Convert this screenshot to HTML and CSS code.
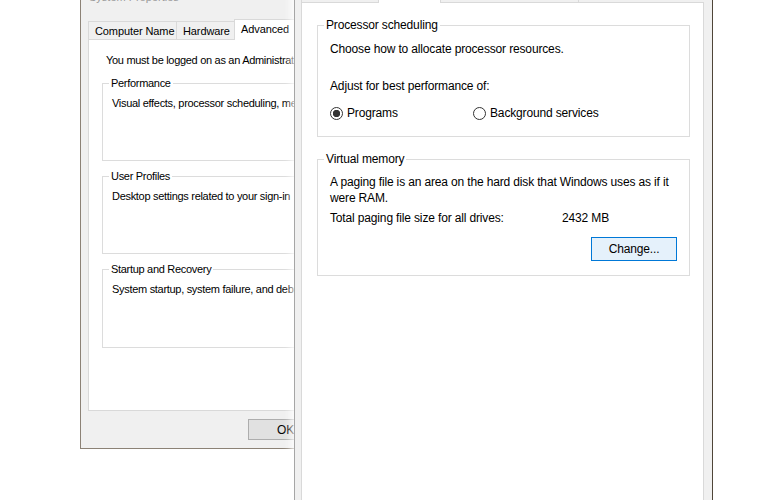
FILE: index.html
```html
<!DOCTYPE html>
<html lang="en">
  <head>
    <meta charset="UTF-8" />
    <meta name="viewport" content="width=device-width, initial-scale=1.0" />
    <title>Performance Options</title>
    <link rel="stylesheet" href="styles.css">
  </head>
  <body>
    <div class="desk">
      <!-- System Properties, behind -->
      <div class="win win-back">
        <div class="title">System Properties</div>
        <div class="tabs">
          <div class="tab tab-name">Computer Name</div>
          <div class="tab tab-hw">Hardware</div>
          <div class="tab active">Advanced</div>
          <div class="tab">System Protection</div>
        </div>
        <div class="panel">
          <p class="note">You must be logged on as an Administrator to make most of these changes.</p>
          <fieldset class="group">
            <legend>Performance</legend>
            <p>Visual effects, processor scheduling, memory usage, and virtual memory</p>
          </fieldset>
          <fieldset class="group">
            <legend>User Profiles</legend>
            <p>Desktop settings related to your sign-in</p>
          </fieldset>
          <fieldset class="group last">
            <legend>Startup and Recovery</legend>
            <p>System startup, system failure, and debugging information</p>
          </fieldset>
        </div>
        <div class="buttons">
          <button class="btn">OK</button>
          <button class="btn">Cancel</button>
        </div>
      </div>

      <!-- Performance Options, in front -->
      <div class="win win-front">
        <div class="tabs">
          <div class="tab tab-ve">Visual Effects</div>
          <div class="tab active tab-adv">Advanced</div>
          <div class="tab tab-dep">Data Execution Prevention</div>
        </div>
        <div class="panel">
          <fieldset class="box">
            <legend>Processor scheduling</legend>
            <p class="line">Choose how to allocate processor resources.</p>
            <p class="line adjust">Adjust for best performance of:</p>
            <div class="radios">
              <label class="opt first"><span class="radio checked"></span>Programs</label>
              <label class="opt"><span class="radio"></span>Background services</label>
            </div>
          </fieldset>
          <fieldset class="box vm">
            <legend>Virtual memory</legend>
            <p class="line">A paging file is an area on the hard disk that Windows uses as if it<br>were RAM.</p>
            <p class="line total"><span class="key">Total paging file size for all drives:</span>2432 MB</p>
            <div class="actions">
              <button class="btn change">Change...</button>
            </div>
          </fieldset>
        </div>
      </div>
    </div>
  </body>
</html>
```

FILE: styles.css
```css
* {
  box-sizing: border-box;
}

body {
  margin: 0;
  background: #fff;
  font-family: "Segoe UI", "Liberation Sans", Arial, sans-serif;
  font-size: 12px;
  line-height: 16px;
  color: #000;
}

p {
  margin: 0;
}

.desk {
  position: relative;
  width: 769px;
  height: 500px;
  overflow: hidden;
}

/* windows sit on the desktop, so they get coordinates */
.win {
  position: absolute;
  background: #f0f0f0;
  white-space: nowrap;
  overflow: hidden;
}

.win-back {
  z-index: 1;
  left: 80px;
  top: -30px;
  width: 330px;
  height: 479px;
  border: 1px solid #8c8276;
  font-size: 11px;
}

.win-back .title {
  height: 48px;
  padding: 18px 0 0 8px;
  color: #9a9a9a;
}

.tabs {
  display: flex;
  align-items: flex-end;
  position: relative;
  z-index: 1;
}

.win-back .tabs {
  height: 20px;
  padding-left: 7px;
}

.tab {
  height: 18px;
  padding: 0 6px;
  border: 1px solid #d9d9d9;
  border-bottom: none;
  background: #f0f0f0;
  margin-right: -1px;
}

.win-back .tab {
  letter-spacing: -0.1px;
  padding-top: 1px;
}

.win-back .tab-name {
  width: 89px;
}

.win-back .tab-hw {
  width: 59px;
}

.tab.active {
  height: 21px;
  margin-bottom: -1px;
  background: #fff;
}

.panel {
  background: #fff;
  border: 1px solid #d9d9d9;
  letter-spacing: -0.15px;
}

.win-back .panel {
  height: 372px;
  margin: 0 7px;
  padding: 12px 0 0 17px;
  letter-spacing: -0.3px;
}

.group {
  margin: 7px 0 0 -4px;
  padding: 4px 9px 49px;
  border: 1px solid #dcdcdc;
  width: 300px;
}

.group.last {
  padding-bottom: 50px;
}

.group legend {
  padding: 0 2px;
  margin-left: -3px;
}

.buttons {
  display: flex;
  gap: 8px;
  margin-top: 8px;
  padding-left: 167px;
}

.btn {
  font: inherit;
  font-size: 12px;
  letter-spacing: -0.15px;
  color: #000;
  width: 75px;
  height: 21px;
  padding: 0;
  background: #e1e1e1;
  border: 1px solid #adadad;
  border-radius: 0;
}

.win-front {
  z-index: 2;
  left: 294px;
  top: -20px;
  width: 419px;
  height: 560px;
  border: 1px solid #a6a6a6;
  border-right-color: #4f4538;
  box-shadow: -4px 0 8px -1px rgba(255, 255, 255, 0.9);
  overflow: visible;
}

.win-front .tabs {
  height: 21px;
  padding-left: 6px;
}

.win-front .tab {
  color: transparent;
}

.tab-ve {
  width: 78px;
}

.tab-adv {
  width: 63px;
}

.tab-dep {
  width: 139px;
}

.win-front .panel {
  height: 540px;
  margin: 0 8px 0 6px;
  padding: 0 13px 0 15px;
}

.box {
  margin: 14px 0 0;
  padding: 8px 12px 15px;
  border: 1px solid #dcdcdc;
}

.box legend {
  padding: 0 2px;
  margin-left: -6px;
}

.adjust {
  margin-top: 21px;
}

.radios {
  display: flex;
  margin-top: 11px;
  height: 16px;
}

.opt {
  display: flex;
  align-items: center;
  gap: 4px;
}

.opt.first {
  width: 143px;
}

.radio {
  width: 13px;
  height: 13px;
  border: 1px solid #333;
  border-radius: 50%;
  background: #fff;
}

.radio.checked {
  background: radial-gradient(circle, #333 0 3.4px, #fff 4px);
}

.box.vm {
  padding-top: 7px;
  padding-bottom: 14px;
}

.total {
  margin-top: 4px;
}

.key {
  display: inline-block;
  width: 232px;
}

.actions {
  display: flex;
  justify-content: flex-end;
  margin-top: 11px;
}

.btn.change {
  width: 86px;
  height: 24px;
  background: #e5f1fb;
  border-color: #0078d7;
}
```
